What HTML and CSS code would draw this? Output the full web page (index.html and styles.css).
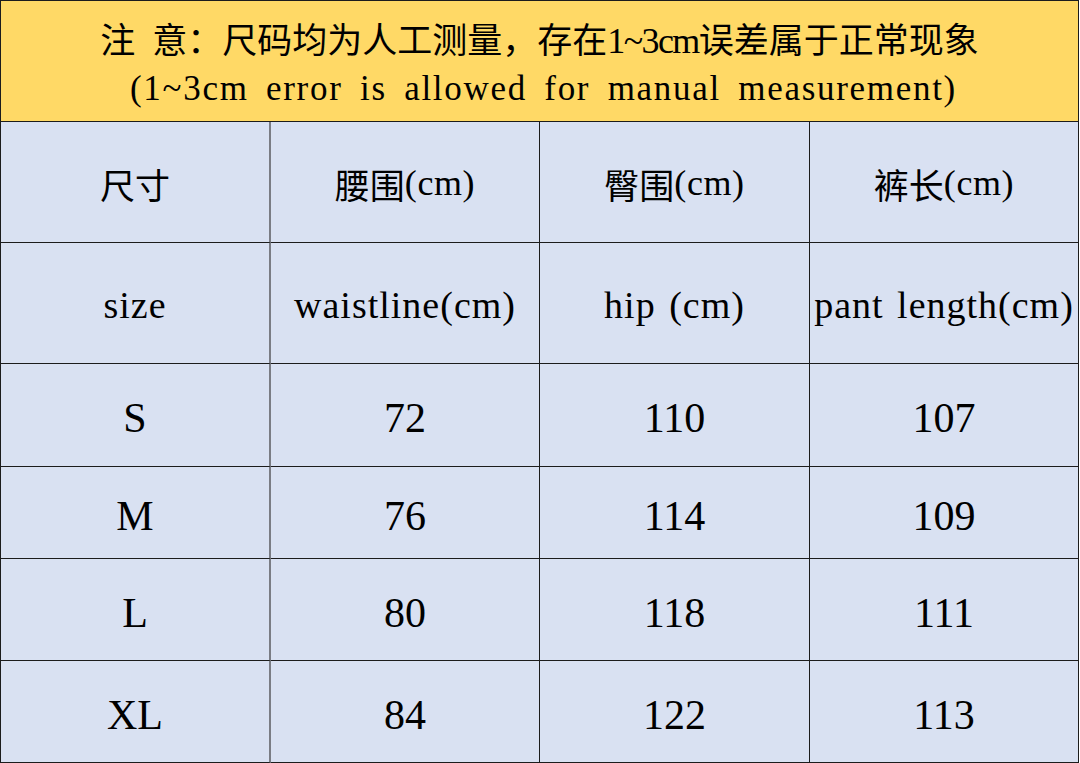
FILE: index.html
```html
<!DOCTYPE html>
<html lang="zh-CN">
<head>
<meta charset="utf-8">
<title>尺码表</title>
<link rel="stylesheet" href="styles.css">
</head>
<body>
<div class="sheet">
  <div class="notice">
    <div class="notice-cn">注<span class="gap"></span>意：尺码均为人工测量，存在<span class="m">1~3cm</span>误差属于正常现象</div>
    <div class="notice-en">(1~3cm error is allowed for manual measurement)</div>
  </div>
  <div class="grid">
    <div class="cell first cn">尺寸</div>
    <div class="cell cn">腰围<span class="mh">(cm)</span></div>
    <div class="cell cn">臀围<span class="mh">(cm)</span></div>
    <div class="cell cn last">裤长<span class="mh">(cm)</span></div>

    <div class="cell first en">size</div>
    <div class="cell en">waistline(cm)</div>
    <div class="cell en">hip (cm)</div>
    <div class="cell en last">pant length(cm)</div>

    <div class="cell first num">S</div>
    <div class="cell num">72</div>
    <div class="cell num">110</div>
    <div class="cell num last">107</div>

    <div class="cell first num">M</div>
    <div class="cell num">76</div>
    <div class="cell num">114</div>
    <div class="cell num last">109</div>

    <div class="cell first num">L</div>
    <div class="cell num">80</div>
    <div class="cell num">118</div>
    <div class="cell num last">111</div>

    <div class="cell first num">XL</div>
    <div class="cell num">84</div>
    <div class="cell num">122</div>
    <div class="cell num last">113</div>
  </div>
</div>
</body>
</html>
```
FILE: styles.css
```css
html, body {
  margin: 0;
  padding: 0;
  background: #ffffff;
}
.sheet {
  width: 1079px;
  height: 763px;
  border-left: 1px solid #1c1c1c;
  box-sizing: border-box;
  color: #000;
  font-family: "Noto Sans CJK SC", "Liberation Serif", serif;
}
.notice {
  height: 122px;
  box-sizing: border-box;
  border-top: 1px solid #1c1c1c;
  border-bottom: 1px solid #1c1c1c;
  border-right: 1px solid #1c1c1c;
  background: #ffd966;
  display: flex;
  flex-direction: column;
  align-items: center;
  justify-content: center;
  padding-top: 4px;
}
.notice-cn {
  font-size: 35px;
  line-height: 47px;
  white-space: nowrap;
}
.notice-cn .gap {
  display: inline-block;
  width: 17px;
}
.notice-cn .m {
  font-family: "Liberation Serif", serif;
  font-size: 36px;
  letter-spacing: -1.6px;
}
.notice-en {
  font-family: "Liberation Serif", serif;
  font-size: 35px;
  letter-spacing: 1.7px;
  word-spacing: 7px;
  line-height: 47px;
  white-space: nowrap;
  padding-left: 8px;
}
.grid {
  display: grid;
  grid-template-columns: 270px 269px 270px 269px;
  grid-template-rows: 121px 121px 103px 92px 102px 102px;
  background: #d9e1f2;
}
.cell {
  box-sizing: border-box;
  border-right: 1px solid #1c1c1c;
  border-bottom: 1px solid #1c1c1c;
  display: flex;
  align-items: center;
  justify-content: center;
  white-space: nowrap;
}
.cell.first {
  border-right: 2px solid #7a7c84;
}
.cn {
  font-size: 35px;
  padding-top: 2px;
}
.mh {
  font-family: "Liberation Serif", serif;
  font-size: 36px;
  letter-spacing: 0.6px;
}
.en {
  font-family: "Liberation Serif", serif;
  font-size: 38px;
  letter-spacing: 1px;
  word-spacing: 3px;
  padding-top: 4px;
}
.num {
  font-family: "Liberation Serif", serif;
  font-size: 42px;
  padding-top: 6px;
}
```
